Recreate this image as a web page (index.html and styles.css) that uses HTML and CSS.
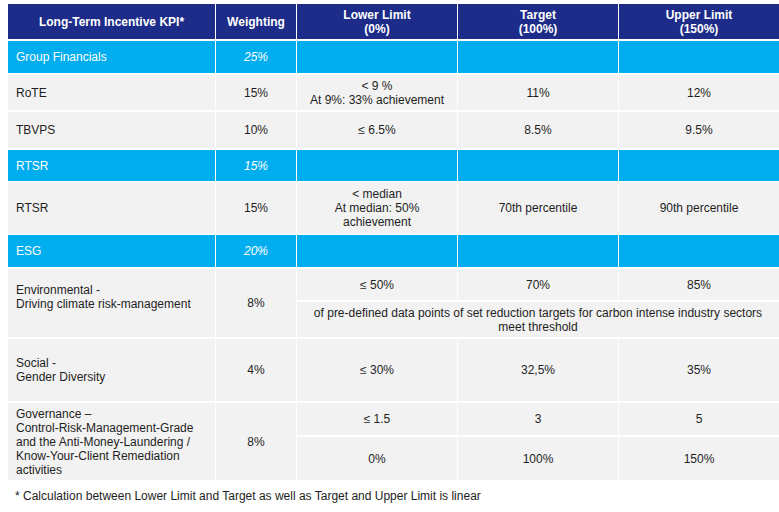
FILE: index.html
```html
<!DOCTYPE html>
<html lang="en">
<head>
<meta charset="utf-8">
<title>Long-Term Incentive KPI</title>
<link rel="stylesheet" href="styles.css">
</head>
<body>
<table class="kpi">
  <colgroup>
    <col class="c-kpi"><col class="c-w"><col class="c-v"><col class="c-v"><col class="c-v">
  </colgroup>
  <thead>
    <tr class="r-head">
      <th>Long-Term Incentive KPI*</th>
      <th>Weighting</th>
      <th>Lower Limit<br>(0%)</th>
      <th>Target<br>(100%)</th>
      <th>Upper Limit<br>(150%)</th>
    </tr>
  </thead>
  <tbody>
    <tr class="group r-gf">
      <td class="label">Group Financials</td><td class="w">25%</td><td></td><td></td><td></td>
    </tr>
    <tr class="r-rote">
      <td class="label">RoTE</td><td>15%</td><td class="arial">&lt; 9 %<br>At 9%: 33% achievement</td><td>11%</td><td>12%</td>
    </tr>
    <tr class="r-tbvps">
      <td class="label">TBVPS</td><td>10%</td><td>≤ 6.5%</td><td>8.5%</td><td>9.5%</td>
    </tr>
    <tr class="group r-rtsrh">
      <td class="label">RTSR</td><td class="w">15%</td><td></td><td></td><td></td>
    </tr>
    <tr class="r-rtsr">
      <td class="label">RTSR</td><td>15%</td><td>&lt; median<br>At median: 50%<br>achievement</td><td>70th percentile</td><td>90th percentile</td>
    </tr>
    <tr class="group r-esg">
      <td class="label">ESG</td><td class="w">20%</td><td></td><td></td><td></td>
    </tr>
    <tr class="r-env1">
      <td class="label env" rowspan="2">Environmental -<br>Driving climate risk-management</td><td rowspan="2">8%</td><td>≤ 50%</td><td>70%</td><td>85%</td>
    </tr>
    <tr class="r-env2">
      <td colspan="3" class="note">of pre-defined data points of set reduction targets for carbon intense industry sectors<br>meet threshold</td>
    </tr>
    <tr class="r-soc">
      <td class="label">Social -<br>Gender Diversity</td><td>4%</td><td>≤ 30%</td><td>32,5%</td><td>35%</td>
    </tr>
    <tr class="r-gov1">
      <td class="label" rowspan="2">Governance –<br>Control-Risk-Management-Grade<br>and the Anti-Money-Laundering /<br>Know-Your-Client Remediation<br>activities</td><td rowspan="2">8%</td><td class="arial">≤ 1.5</td><td class="arial">3</td><td class="arial">5</td>
    </tr>
    <tr class="r-gov2">
      <td class="arial">0%</td><td class="arial">100%</td><td class="arial">150%</td>
    </tr>
  </tbody>
</table>
<p class="footnote">* Calculation between Lower Limit and Target as well as Target and Upper Limit is linear</p>
</body>
</html>
```

FILE: styles.css
```css
html, body {
  margin: 0;
  padding: 0;
  background: #ffffff;
}

body {
  font-family: "Liberation Sans", Arial, sans-serif;
  font-size: 12px;
  line-height: 14px;
  color: #1e1e1e;
}

.kpi {
  table-layout: fixed;
  border-collapse: separate;
  border-spacing: 1px 2px;
  width: 768px;
  margin: 2px 0 0 7px;
}

.c-kpi { width: 207px; }
.c-w { width: 80px; }
.c-v { width: 160px; }

.kpi th,
.kpi td {
  padding: 0 6px;
  text-align: center;
  vertical-align: middle;
  background: #f2f2f2;
}

.kpi th {
  background: #1d2c88;
  color: #ffffff;
  font-weight: 700;
}

.kpi td.label {
  text-align: left;
  padding-left: 8px;
}

.kpi td.note {
  padding: 0 2px;
  white-space: nowrap;
}

.kpi tr.group td {
  background: #00adef;
  color: #ffffff;
}

.kpi tr.group td.w {
  font-style: italic;
}

.kpi td.arial {
  font-family: "Liberation Sans", Arial, sans-serif;
}

.kpi td.env {
  padding-bottom: 12px;
}

.r-head { height: 35px; }
.r-gf { height: 32px; }
.r-rote { height: 35px; }
.r-tbvps { height: 36px; }
.r-rtsrh { height: 31px; }
.r-rtsr { height: 50px; }
.r-esg { height: 32px; }
.r-env1 { height: 31px; }
.r-env2 { height: 35px; }
.r-soc { height: 62px; }
.r-gov1 { height: 32px; }
.r-gov2 { height: 43px; }

.footnote {
  margin: 7px 0 0 15px;
  font-size: 12px;
  line-height: 14px;
}
```
